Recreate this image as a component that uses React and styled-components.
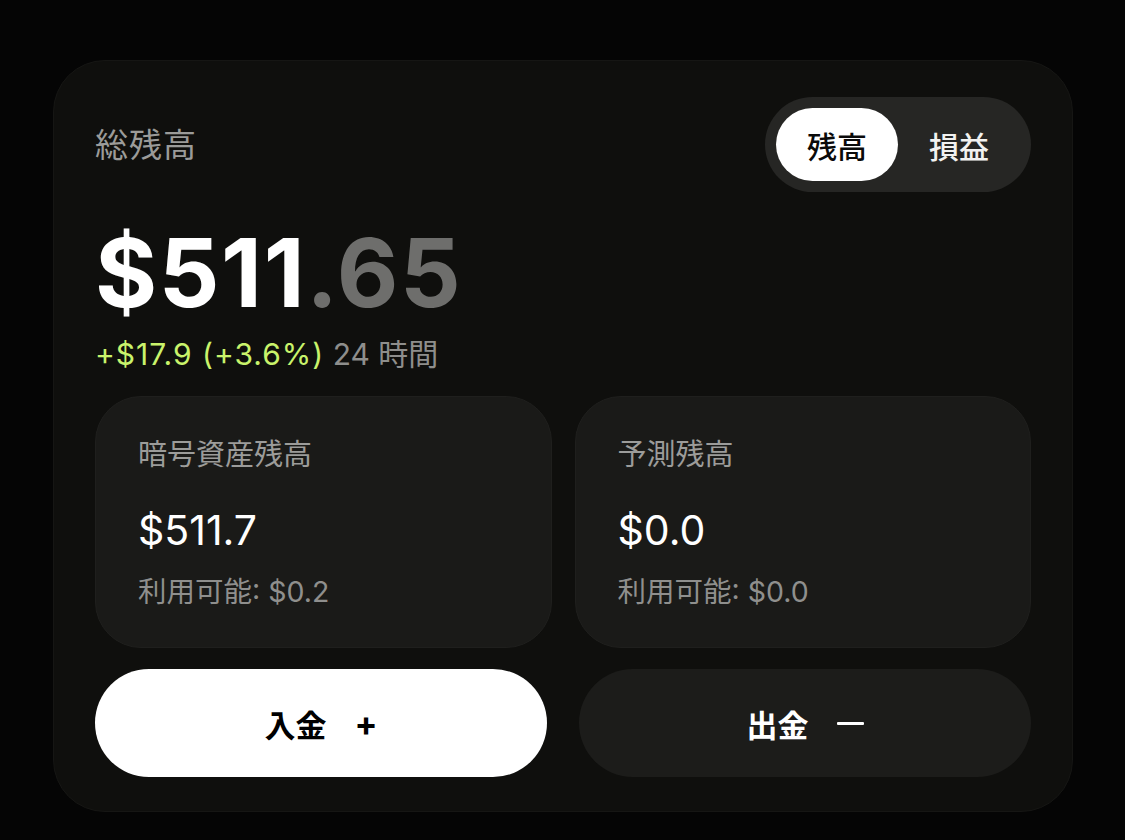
import React, { useState } from "react";
import styled, { createGlobalStyle } from "styled-components";

const Global = createGlobalStyle`
  html, body {
    margin: 0;
    padding: 0;
    background: #050505;
  }
  body {
    font-family: "Inter", "Noto Sans CJK JP", "Noto Sans", sans-serif;
    -webkit-font-smoothing: antialiased;
  }
`;

const Page = styled.div`
  width: 1125px;
  height: 840px;
  padding: 60px 52px 28px 53px;
  box-sizing: border-box;
  background: #050505;
`;

const Card = styled.section`
  box-sizing: border-box;
  height: 752px;
  background: #0f0f0d;
  border: 1px solid #161614;
  border-radius: 52px;
  padding: 36px 41px 34px 41px;
  display: flex;
  flex-direction: column;
`;

const Header = styled.div`
  display: flex;
  align-items: center;
  justify-content: space-between;
`;

const Title = styled.h2`
  margin: 0 0 4px 0;
  font-size: 33px;
  font-weight: 400;
  color: #9b9b99;
  letter-spacing: 1px;
`;

const Toggle = styled.div`
  display: flex;
  padding: 11px;
  background: #262624;
  border-radius: 999px;
`;

const ToggleItem = styled.button`
  width: 122px;
  height: 73px;
  border: none;
  border-radius: 999px;
  font-family: inherit;
  font-size: 30px;
  font-weight: 500;
  cursor: pointer;
  background: ${(p) => (p.$active ? "#ffffff" : "transparent")};
  color: ${(p) => (p.$active ? "#0a0a0a" : "#f2f2f0")};
`;

const Amount = styled.div`
  margin-top: 33px;
  font-size: 95px;
  font-weight: 700;
  line-height: 1;
  letter-spacing: 1.6px;
  color: #ffffff;
`;

const Cents = styled.span`
  color: #6e6e6c;
`;

const Change = styled.div`
  margin-top: 16px;
  font-size: 30px;
  line-height: 36px;
  letter-spacing: 0;
  color: #8e8e8c;
`;

const Gain = styled.span`
  color: #c9f36b;
  letter-spacing: 1px;
`;

const Tiles = styled.div`
  margin-top: 24px;
  display: grid;
  grid-template-columns: 1fr 1fr;
  gap: 23px;
`;

const Tile = styled.div`
  height: 252px;
  box-sizing: border-box;
  background: #1a1a18;
  border: 1px solid #1f1f1d;
  border-radius: 46px;
  padding: 40px 42px;
  display: flex;
  flex-direction: column;
`;

const TileLabel = styled.div`
  font-size: 29px;
  line-height: 36px;
  color: #9c9c9a;
`;

const TileValue = styled.div`
  margin-top: 37px;
  font-size: 41px;
  line-height: 40px;
  color: #ffffff;
`;

const TileSub = styled.div`
  margin-top: 25px;
  font-size: 28.5px;
  line-height: 34px;
  color: #8f8f8d;
`;

const Actions = styled.div`
  margin-top: 21px;
  display: grid;
  grid-template-columns: 1fr 1fr;
  gap: 32px;
`;

const ActionButton = styled.button`
  height: 108px;
  border: none;
  border-radius: 999px;
  background: ${(p) => (p.$primary ? "#ffffff" : "#1c1c1a")};
  color: ${(p) => (p.$primary ? "#000000" : "#ffffff")};
  font-family: inherit;
  font-size: 31px;
  font-weight: 700;
  display: flex;
  align-items: center;
  justify-content: center;
  gap: 28px;
  cursor: pointer;
`;

const Sign = styled.span`
  font-size: 34px;
  font-weight: 700;
`;

const Dash = styled.span`
  display: inline-block;
  width: 27px;
  height: 3px;
  background: currentColor;
  border-radius: 1px;
`;

export default function App() {
  const [mode, setMode] = useState("balance");
  return (
    <Page>
      <Global />
      <Card>
        <Header>
          <Title>総残高</Title>
          <Toggle>
            <ToggleItem $active={mode === "balance"} onClick={() => setMode("balance")}>
              残高
            </ToggleItem>
            <ToggleItem $active={mode === "pnl"} onClick={() => setMode("pnl")}>
              損益
            </ToggleItem>
          </Toggle>
        </Header>
        <Amount>
          $511<Cents>.65</Cents>
        </Amount>
        <Change>
          <Gain>+$17.9 (+3.6%)</Gain> 24 時間
        </Change>
        <Tiles>
          <Tile>
            <TileLabel>暗号資産残高</TileLabel>
            <TileValue>$511.7</TileValue>
            <TileSub>利用可能: $0.2</TileSub>
          </Tile>
          <Tile>
            <TileLabel>予測残高</TileLabel>
            <TileValue>$0.0</TileValue>
            <TileSub>利用可能: $0.0</TileSub>
          </Tile>
        </Tiles>
        <Actions>
          <ActionButton $primary>
            入金 <Sign>+</Sign>
          </ActionButton>
          <ActionButton>
            出金 <Dash />
          </ActionButton>
        </Actions>
      </Card>
    </Page>
  );
}
